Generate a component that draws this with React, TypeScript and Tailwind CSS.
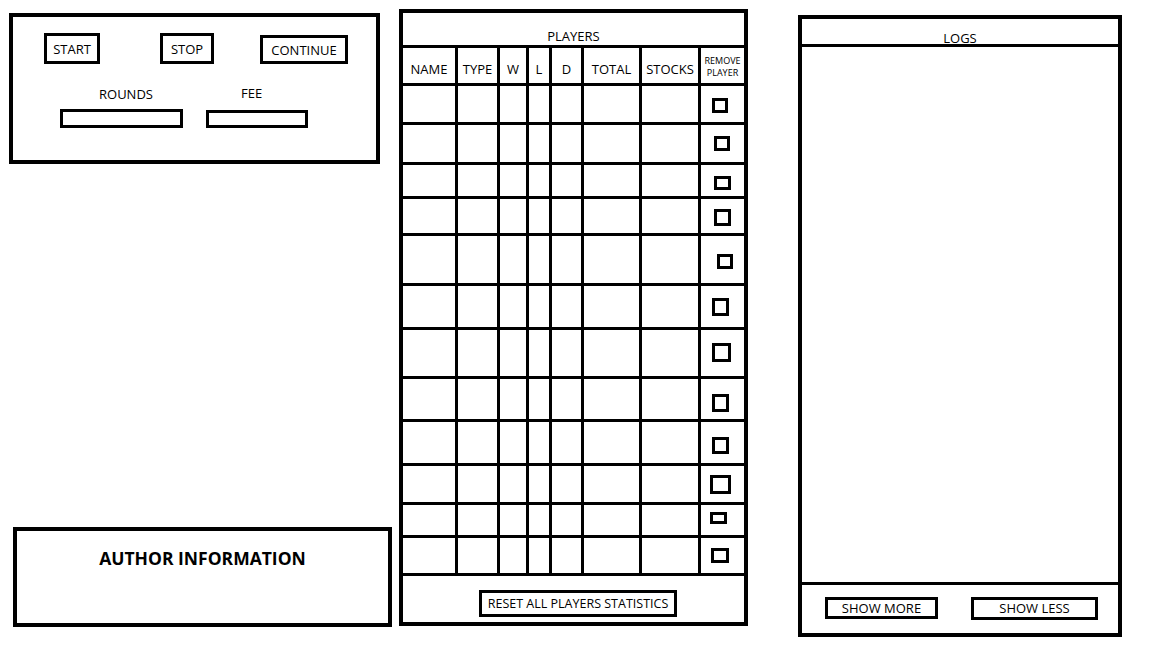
const columns = ["NAME", "TYPE", "W", "L", "D", "TOTAL", "STOCKS"];

// row height includes the 3px bottom rule; box sizes follow the sketch
const rows = [
  { h: "h-[39px]", box: "w-[16px] h-[15px] -translate-x-[3px] translate-y-[1px]" },
  { h: "h-[40px]", box: "w-[16px] h-[15px] -translate-x-[1px]" },
  { h: "h-[34px]", box: "w-[17px] h-[14px] translate-y-[2px]" },
  { h: "h-[37px]", box: "w-[17px] h-[17px] translate-y-[1px]" },
  { h: "h-[50px]", box: "w-[16px] h-[15px] translate-x-[2px] translate-y-[2px]" },
  { h: "h-[44px]", box: "w-[17px] h-[18px] -translate-x-[2px]" },
  { h: "h-[49px]", box: "w-[19px] h-[19px] -translate-x-[1px] -translate-y-[1px]" },
  { h: "h-[43px]", box: "w-[17px] h-[18px] -translate-x-[2px] translate-y-[4px]" },
  { h: "h-[44px]", box: "w-[17px] h-[17px] -translate-x-[2px] translate-y-[3px]" },
  { h: "h-[39px]", box: "w-[21px] h-[19px] -translate-x-[2px]" },
  { h: "h-[33px]", box: "w-[17px] h-[12px] -translate-x-[4px] -translate-y-[2px]" },
  { h: "h-[38px]", box: "w-[18px] h-[15px] -translate-x-[3px]" },
];

const grid = "grid grid-cols-[55px_42px_29px_23px_32px_58px_59px_43px]";

function ControlPanel() {
  return (
    <div className="ml-[9px] w-[371px] h-[151px] border-[4px] border-black">
      <div className="flex items-start pt-[16px]">
        <button className="ml-[31px] w-[56px] h-[31px] border-[3px] border-black text-[13px] leading-none pt-[1px]">START</button>
        <button className="ml-[60px] w-[54px] h-[31px] border-[3px] border-black text-[13px] leading-none pt-[1px]">STOP</button>
        <button className="ml-[46px] mt-[2px] w-[88px] h-[29px] border-[3px] border-black text-[13px] leading-none pt-[2px]">CONTINUE</button>
      </div>
      <div className="flex items-start mt-[24px]">
        <div className="ml-[47px] flex flex-col">
          <span className="pl-[39px] text-[13px] leading-none">ROUNDS</span>
          <div className="mt-[8px] w-[123px] h-[19px] border-[3px] border-black" />
        </div>
        <div className="ml-[23px] flex flex-col">
          <span className="pl-[35px] -mt-[1px] text-[13px] leading-none">FEE</span>
          <div className="mt-[10px] w-[102px] h-[18px] border-[3px] border-black" />
        </div>
      </div>
    </div>
  );
}

function PlayersPanel() {
  return (
    <div className="ml-[7px] mt-[9px] w-[349px] h-[617px] border-[4px] border-black flex flex-col">
      <div className="h-[35px] border-b-[3px] border-black flex items-end justify-center pb-[2px] text-[13px] leading-none">
        PLAYERS
      </div>
      <div className={`${grid} h-[38px]`}>
        {columns.map((c) => (
          <div
            key={c}
            className="border-r-[3px] border-b-[3px] border-black flex items-center justify-center pt-[7px] text-[13px] leading-none"
          >
            {c}
          </div>
        ))}
        <div className="border-b-[3px] border-black flex flex-col items-center justify-center pt-[2px] text-[9px] leading-[12px]">
          <span>REMOVE</span>
          <span>PLAYER</span>
        </div>
      </div>
      {rows.map((r, i) => (
        <div key={i} className={`${grid} ${r.h}`}>
          {columns.map((c) => (
            <div key={c} className="border-r-[3px] border-b-[3px] border-black" />
          ))}
          <div className="border-b-[3px] border-black flex items-center justify-center">
            <div className={`${r.box} border-[3px] border-black`} />
          </div>
        </div>
      ))}
      <div className="flex-1 flex items-start">
        <button className="ml-[76px] mt-[14px] w-[198px] h-[27px] border-[3px] border-black text-[12.5px] leading-none pt-[1px]">
          RESET ALL PLAYERS STATISTICS
        </button>
      </div>
    </div>
  );
}

function LogsPanel() {
  return (
    <div className="ml-[50px] mt-[15px] w-[324px] h-[622px] border-[4px] border-black flex flex-col">
      <div className="h-[28px] border-b-[3px] border-black flex items-end justify-center text-[13px] leading-none">
        <span className="translate-y-[1px]">LOGS</span>
      </div>
      <div className="flex-1" />
      <div className="h-[51px] border-t-[3px] border-black flex items-start pt-[12px]">
        <button className="ml-[23px] w-[113px] h-[22px] border-[3px] border-black text-[13px] leading-none">SHOW MORE</button>
        <button className="ml-[33px] w-[127px] h-[23px] border-[3px] border-black text-[13px] leading-none">SHOW LESS</button>
      </div>
    </div>
  );
}

export default function App() {
  return (
    <div className="w-[1152px] h-[648px] bg-white text-black flex items-start font-['Open_Sans',sans-serif]">
      <div className="w-[392px] h-[648px] flex flex-col pt-[13px] pb-[21px]">
        <ControlPanel />
        <div className="mt-auto ml-[13px] w-[379px] h-[100px] border-[4px] border-black flex justify-center pt-[19px]">
          <span className="text-[17.5px] font-bold leading-none">AUTHOR INFORMATION</span>
        </div>
      </div>
      <PlayersPanel />
      <LogsPanel />
    </div>
  );
}
